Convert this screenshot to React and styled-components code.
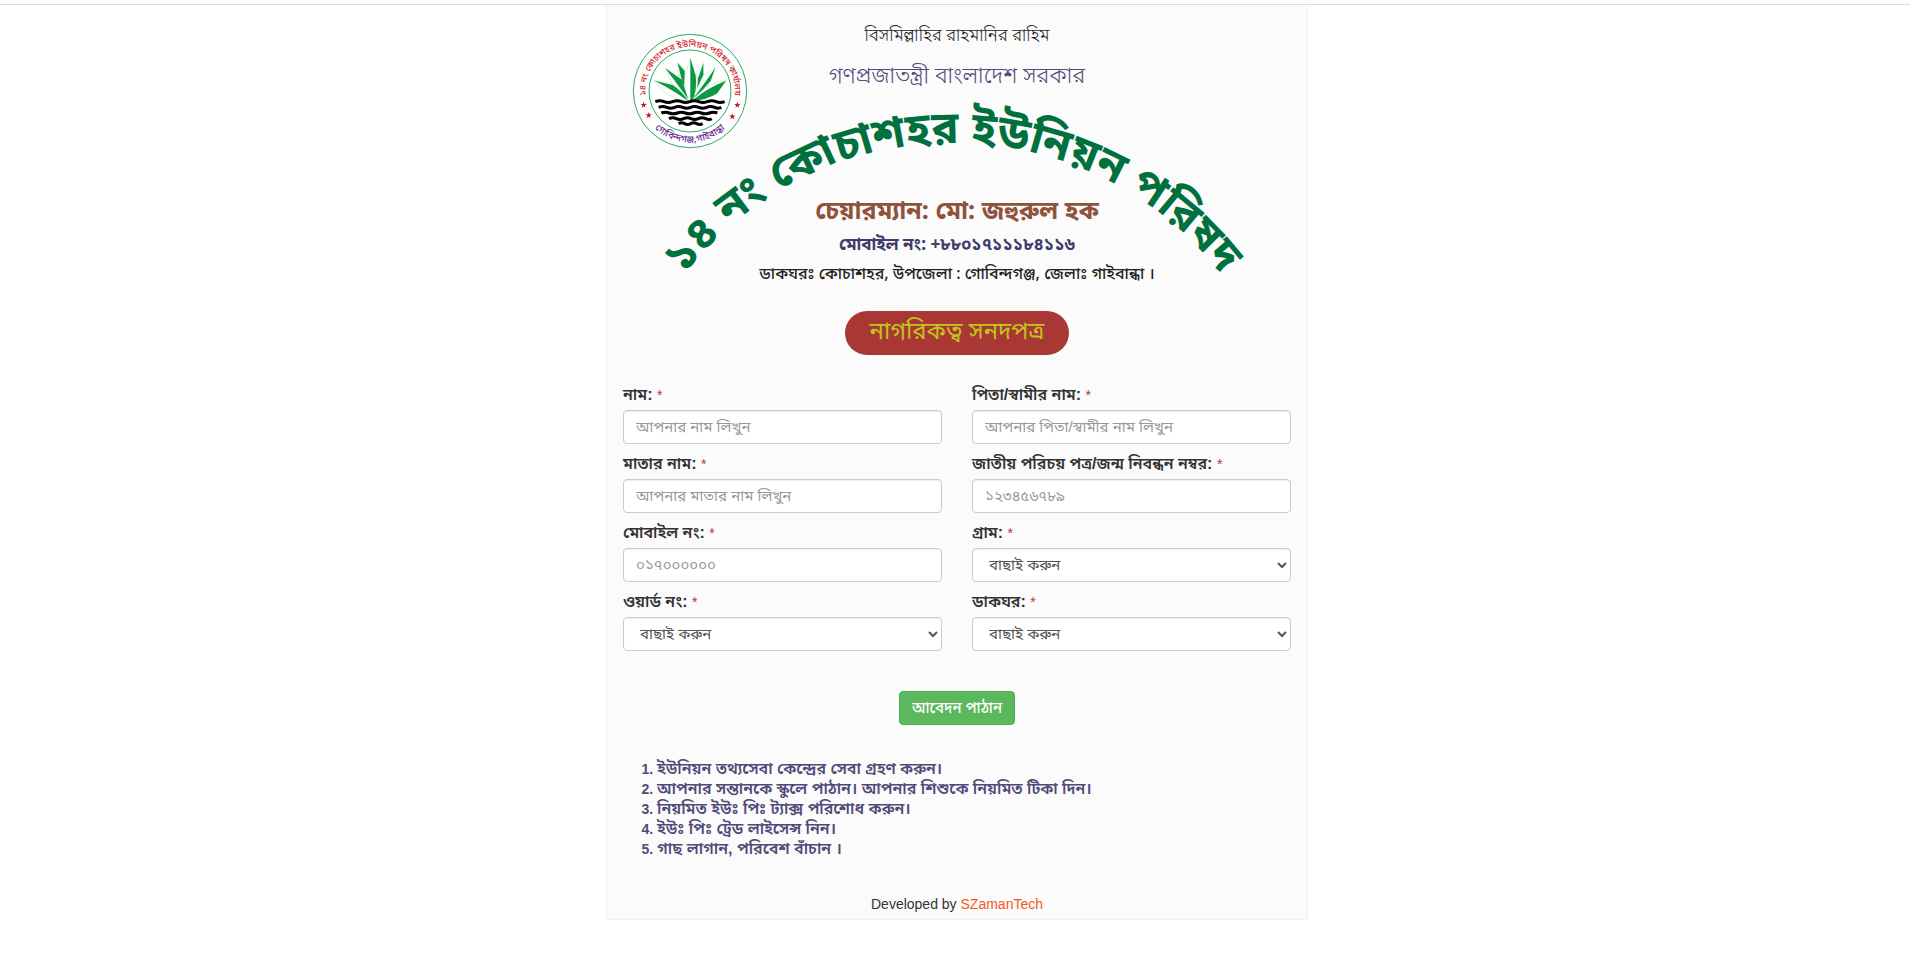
import React from "react";
import styled, { createGlobalStyle } from "styled-components";

const bangla = `"Liberation Sans", "Noto Sans Bengali", "Noto Sans", sans-serif`;
const headingFont = `"Noto Sans Bengali", "Noto Sans", "Liberation Sans", sans-serif`;

const GlobalStyle = createGlobalStyle`
  *, *::before, *::after { box-sizing: border-box; }
  body {
    margin: 0;
    background: #fff;
    color: #333;
    font-family: ${bangla};
    font-size: 14px;
    line-height: 20px;
  }
`;

const Page = styled.div`
  margin-top: 4px;
  padding-left: 4px;
  border-top: 1px solid #ddd;
`;

const Card = styled.main`
  max-width: 702px;
  margin: 0 auto;
  padding: 0 16px 5px;
  background: #fbfbfb;
  border: 1px solid #f2f2f2;
  border-top: 0;
`;

const Header = styled.header`
  display: grid;
  grid-template-columns: 100%;
`;

const Emblem = styled.svg`
  grid-area: 1 / 1;
  width: 116px;
  height: 116px;
  margin: 28px 0 0 9px;
`;

const Arch = styled.svg`
  grid-area: 1 / 1;
  justify-self: center;
  width: 620px;
  height: 215px;
  margin-top: 88px;
  overflow: visible;
`;

const Titles = styled.div`
  grid-area: 1 / 1;
  display: flex;
  flex-direction: column;
  align-items: center;
  text-align: center;
  padding-top: 22px;
`;

const Line = styled.p`
  margin: ${(p) => p.$gap || 0}px 0 0;
  font-family: ${headingFont};
  font-size: ${(p) => p.$size}px;
  line-height: ${(p) => p.$lh}px;
  font-weight: ${(p) => p.$weight || 400};
  color: ${(p) => p.$color};
`;

const Badge = styled.h1`
  width: 224px;
  height: 44px;
  margin: 21px 0 0;
  border-radius: 22px;
  background: #a93835;
  color: #c1c41c;
  font-family: ${headingFont};
  font-size: 24px;
  line-height: 44px;
  font-weight: 400;
`;

const Fields = styled.div`
  display: grid;
  grid-template-columns: 1fr 1fr;
  gap: 10px 30px;
  margin-top: 30px;
`;

const Field = styled.div`
  display: flex;
  flex-direction: column;
  gap: 5px;
`;

const Label = styled.label`
  height: 20px;
  font-size: 16px;
  line-height: 20px;
  font-weight: 600;
  white-space: nowrap;
`;

const Required = styled.span`
  color: #a93835;
  font-size: 14px;
  font-weight: 400;
`;

const controlStyle = `
  width: 100%;
  height: 34px;
  border: 1px solid #ccc;
  border-radius: 4px;
  background-color: #fff;
  color: #555;
  font-family: inherit;
  font-size: 15px;
  box-shadow: inset 0 1px 1px rgba(0, 0, 0, 0.075);
`;

const Input = styled.input`
  ${controlStyle}
  padding: 3px 12px 5px;
  &::placeholder { color: #999; opacity: 1; }
`;

const Select = styled.select`
  ${controlStyle}
  padding: 3px 12px 5px;
`;

const Actions = styled.div`
  display: flex;
  justify-content: center;
  margin-top: 40px;
`;

const Submit = styled.button`
  height: 34px;
  padding: 0 12px;
  border: 1px solid #4cae4c;
  border-radius: 4px;
  background: #5cb85c;
  color: #fff;
  font-family: inherit;
  font-size: 15px;
  line-height: 20px;
  font-weight: 500;
`;

const Notices = styled.ol`
  margin: 34px 0 0;
  padding-left: 34px;
  color: #504a78;
  line-height: 20px;
`;

const Notice = styled.li`
  height: 20px;
  font-size: 16px;
  font-weight: 600;
  &::marker { font-size: 14px; font-weight: 700; }
`;

const Footer = styled.footer`
  margin-top: 35px;
  text-align: center;
`;

const FooterLink = styled.a`
  color: #f05a1a;
  text-decoration: none;
`;

const fields = [
  { id: "name", label: "নাম:", placeholder: "আপনার নাম লিখুন" },
  { id: "guardian", label: "পিতা/স্বামীর নাম:", placeholder: "আপনার পিতা/স্বামীর নাম লিখুন" },
  { id: "mother", label: "মাতার নাম:", placeholder: "আপনার মাতার নাম লিখুন" },
  { id: "nid", label: "জাতীয় পরিচয় পত্র/জন্ম নিবন্ধন নম্বর:", placeholder: "১২৩৪৫৬৭৮৯" },
  { id: "mobile", label: "মোবাইল নং:", placeholder: "০১৭০০০০০০" },
  { id: "village", label: "গ্রাম:", options: ["বাছাই করুন"] },
  { id: "ward", label: "ওয়ার্ড নং:", options: ["বাছাই করুন"] },
  { id: "post", label: "ডাকঘর:", options: ["বাছাই করুন"] },
];

const notices = [
  "ইউনিয়ন তথ্যসেবা কেন্দ্রের সেবা গ্রহণ করুন।",
  "আপনার সন্তানকে স্কুলে পাঠান। আপনার শিশুকে নিয়মিত টিকা দিন।",
  "নিয়মিত ইউঃ পিঃ ট্যাক্স পরিশোধ করুন।",
  "ইউঃ পিঃ ট্রেড লাইসেন্স নিন।",
  "গাছ লাগান, পরিবেশ বাঁচান ।",
];

const star = "M0-10 2.4-3.2 9.5-3.1 3.8 1.2 5.9 8.1 0 4-5.9 8.1-3.8 1.2-9.5-3.1-2.4-3.2z";

function Logo() {
  return (
    <Emblem viewBox="36 24 348 348" role="img" aria-label="ইউনিয়ন পরিষদ লোগো">
      <defs>
        <path id="ringTop" d="M 80 232 A 134 134 0 1 1 340 232" />
        <path id="ringBottom" d="M 60 233 A 154 154 0 0 0 360 233" />
      </defs>
      <circle cx="210" cy="198" r="170" fill="#fff" stroke="#2fa866" strokeWidth="3" />
      <circle cx="210" cy="198" r="123" fill="#fff" stroke="#2fa866" strokeWidth="3" />
      <g fill="#fff" stroke="#7cc79a" strokeWidth="1">
        <path d="M173 114 L194 136 V170 L188 190 L178 160z" />
        <path d="M250 115 L250 150 L236 180 L229 140z" />
        <path d="M136 130 L182 155 L203 222 L160 185z" />
        <path d="M286 128 L244 154 L218 222 L262 185z" />
        <path d="M103 167 Q165 172 204 228 Q138 222 103 167z" />
        <path d="M318 167 Q258 172 216 228 Q286 222 318 167z" />
        <path d="M211 100 L195 152 Q190 195 206 228 H216 Q232 195 227 152z" />
      </g>
      <g fill="#0a9a42">
        <path d="M173 114 L194 138 192 186 Q181 150 173 114z" />
        <path d="M250 115 L250 150 232 188 234 160z" />
        <path d="M136 130 L186 164 204 222 Q170 175 136 130z" />
        <path d="M286 128 L272 168 Q250 195 218 222 Q250 180 286 128z" />
        <path d="M103 167 L158 180 Q188 200 204 228 Q160 195 103 167z" />
        <path d="M318 167 L292 205 Q262 225 216 228 Q258 190 318 167z" />
        <path d="M211 100 L227 152 Q232 195 217 226 L211 229z" />
      </g>
      <g stroke="#000" strokeWidth="9" fill="none">
        <path d="M106 230 q14-5 26 0 t26 0 26 0 26 0 26 0 26 0 26 0 26 0" />
        <path d="M116 247 q12-5 24 0 t24 0 24 0 24 0 24 0 24 0 24 0 20 0" />
        <path d="M124 264 q12-5 24 0 t24 0 24 0 24 0 24 0 24 0 24 0" />
        <path d="M147 281 q11-5 22 0 t22 0 22 0 22 0 22 0 18 0" />
        <path d="M176 296 q9-5 18 0 t18 0 18 0 18 0" />
      </g>
      <g fill="#c01820">
        <path transform="translate(71 240)" d={star} />
        <path transform="translate(86 271)" d={star} />
        <path transform="translate(352 240)" d={star} />
        <path transform="translate(337 275)" d={star} />
      </g>
      <g fontFamily={headingFont} fontWeight="500" textAnchor="middle">
        <text fontSize="26" fill="#cc1f26">
          <textPath href="#ringTop" startOffset="50%">১৪ নং কোচাশহর ইউনিয়ন পরিষদ কার্যালয়</textPath>
        </text>
        <text fontSize="29" fill="#6a2c91">
          <textPath href="#ringBottom" startOffset="50%">গোবিন্দগঞ্জ,গাইবান্ধা</textPath>
        </text>
      </g>
    </Emblem>
  );
}

function FormField({ id, label, placeholder, options }) {
  return (
    <Field>
      <Label htmlFor={id}>
        {label} <Required>*</Required>
      </Label>
      {options ? (
        <Select id={id} name={id}>
          {options.map((o) => (
            <option key={o}>{o}</option>
          ))}
        </Select>
      ) : (
        <Input id={id} name={id} type="text" placeholder={placeholder} />
      )}
    </Field>
  );
}

export default function App() {
  return (
    <Page>
      <GlobalStyle />
      <Card>
        <Header>
          <Logo />
          <Arch viewBox="0 0 620 215">
            <defs>
              <path id="arch" d="M 17 211 A 340 340 0 0 1 595 211" />
            </defs>
            <text fontFamily={headingFont} fontWeight="700" fontSize="45" fill="#00703f" textAnchor="middle">
              <textPath href="#arch" startOffset="50%">১৪ নং কোচাশহর ইউনিয়ন পরিষদ</textPath>
            </text>
          </Arch>
          <Titles>
            <Line $size={17} $lh={20} $weight={300} $color="#222">বিসমিল্লাহির রাহমানির রাহিম</Line>
            <Line $size={22} $lh={30} $gap={16} $weight={300} $color="#504a78">গণপ্রজাতন্ত্রী বাংলাদেশ সরকার</Line>
            <Line $size={25} $lh={30} $gap={105} $weight={700} $color="#8f523c">চেয়ারম্যান: মো: জহুরুল হক</Line>
            <Line $size={17} $lh={30} $gap={3} $weight={700} $color="#3f3b6c">মোবাইল নং: +৮৮০১৭১১১৮৪১১৬</Line>
            <Line $size={16} $lh={29} $weight={500} $color="#222">ডাকঘরঃ কোচাশহর, উপজেলা : গোবিন্দগঞ্জ, জেলাঃ গাইবান্ধা ।</Line>
            <Badge>নাগরিকত্ব সনদপত্র</Badge>
          </Titles>
        </Header>
        <form onSubmit={(e) => e.preventDefault()}>
          <Fields>
            {fields.map((f) => (
              <FormField key={f.id} {...f} />
            ))}
          </Fields>
          <Actions>
            <Submit type="submit">আবেদন পাঠান</Submit>
          </Actions>
        </form>
        <Notices>
          {notices.map((n) => (
            <Notice key={n}>{n}</Notice>
          ))}
        </Notices>
        <Footer>
          Developed by <FooterLink href="#">SZamanTech</FooterLink>
        </Footer>
      </Card>
    </Page>
  );
}
